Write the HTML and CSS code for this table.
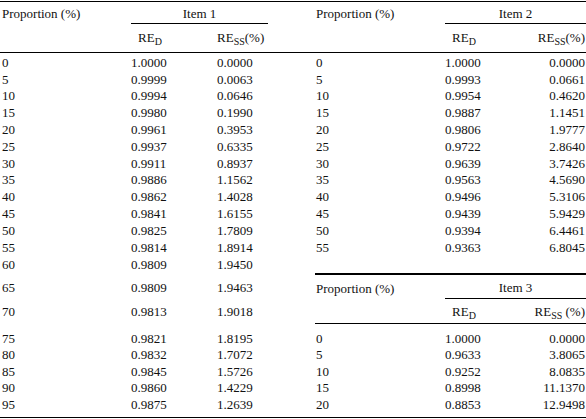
FILE: index.html
```html
<!DOCTYPE html>
<html>
	<head>
		<meta charset="UTF-8">
		<title>Proportion table</title>
		<link rel="stylesheet" href="styles.css">
	</head>
	<body>
		<table class="tbl">
			<colgroup>
				<col class="c-prop">
				<col class="c-red">
				<col class="c-ress">
				<col class="c-gap">
				<col class="c-prop2">
				<col class="c-red2">
				<col class="c-ress2">
			</colgroup>
			<tr class="h1">
				<td class="prop">Proportion (%)</td>
				<td class="item" colspan="2">Item 1</td>
				<td></td>
				<td class="prop p2">Proportion (%)</td>
				<td class="item" colspan="2">Item 2</td>
			</tr>
			<tr class="h2">
				<td></td>
				<td class="hd-red">RE<sub>D</sub></td>
				<td>RE<sub>SS</sub>(%)</td>
				<td></td>
				<td></td>
				<td class="hd-red">RE<sub>D</sub></td>
				<td class="r">RE<sub>SS</sub>(%)</td>
			</tr>
			<tr class="d first"><td>0</td><td>1.0000</td><td>0.0000</td><td></td><td class="p2">0</td><td>1.0000</td><td class="r">0.0000</td></tr>
			<tr class="d"><td>5</td><td>0.9999</td><td>0.0063</td><td></td><td class="p2">5</td><td>0.9993</td><td class="r">0.0661</td></tr>
			<tr class="d"><td>10</td><td>0.9994</td><td>0.0646</td><td></td><td class="p2">10</td><td>0.9954</td><td class="r">0.4620</td></tr>
			<tr class="d"><td>15</td><td>0.9980</td><td>0.1990</td><td></td><td class="p2">15</td><td>0.9887</td><td class="r">1.1451</td></tr>
			<tr class="d"><td>20</td><td>0.9961</td><td>0.3953</td><td></td><td class="p2">20</td><td>0.9806</td><td class="r">1.9777</td></tr>
			<tr class="d"><td>25</td><td>0.9937</td><td>0.6335</td><td></td><td class="p2">25</td><td>0.9722</td><td class="r">2.8640</td></tr>
			<tr class="d"><td>30</td><td>0.9911</td><td>0.8937</td><td></td><td class="p2">30</td><td>0.9639</td><td class="r">3.7426</td></tr>
			<tr class="d"><td>35</td><td>0.9886</td><td>1.1562</td><td></td><td class="p2">35</td><td>0.9563</td><td class="r">4.5690</td></tr>
			<tr class="d"><td>40</td><td>0.9862</td><td>1.4028</td><td></td><td class="p2">40</td><td>0.9496</td><td class="r">5.3106</td></tr>
			<tr class="d"><td>45</td><td>0.9841</td><td>1.6155</td><td></td><td class="p2">45</td><td>0.9439</td><td class="r">5.9429</td></tr>
			<tr class="d"><td>50</td><td>0.9825</td><td>1.7809</td><td></td><td class="p2">50</td><td>0.9394</td><td class="r">6.4461</td></tr>
			<tr class="d"><td>55</td><td>0.9814</td><td>1.8914</td><td></td><td class="p2">55</td><td>0.9363</td><td class="r">6.8045</td></tr>
			<tr class="d split"><td>60</td><td>0.9809</td><td>1.9450</td><td></td><td class="rule"></td><td class="rule"></td><td class="rule"></td></tr>
			<tr class="h3">
				<td>65</td><td>0.9809</td><td>1.9463</td><td></td>
				<td class="prop p2">Proportion (%)</td>
				<td class="item" colspan="2">Item 3</td>
			</tr>
			<tr class="h4">
				<td>70</td><td>0.9813</td><td>1.9018</td><td></td>
				<td class="rule"></td>
				<td class="rule hd-red">RE<sub>D</sub></td>
				<td class="rule r">RE<sub>SS</sub> (%)</td>
			</tr>
			<tr class="e first"><td>75</td><td>0.9821</td><td>1.8195</td><td></td><td class="p2">0</td><td>1.0000</td><td class="r">0.0000</td></tr>
			<tr class="e"><td>80</td><td>0.9832</td><td>1.7072</td><td></td><td class="p2">5</td><td>0.9633</td><td class="r">3.8065</td></tr>
			<tr class="e"><td>85</td><td>0.9845</td><td>1.5726</td><td></td><td class="p2">10</td><td>0.9252</td><td class="r">8.0835</td></tr>
			<tr class="e"><td>90</td><td>0.9860</td><td>1.4229</td><td></td><td class="p2">15</td><td>0.8998</td><td class="r">11.1370</td></tr>
			<tr class="e last"><td>95</td><td>0.9875</td><td>1.2639</td><td></td><td class="p2">20</td><td>0.8853</td><td class="r">12.9498</td></tr>
		</table>
	</body>
</html>
```

FILE: styles.css
```css
body{margin:0; background:#fff;}
.tbl{
	margin-top:1px;
	width:586px;
	table-layout:fixed;
	border-collapse:separate;
	border-spacing:0;
	font:13px/15px "Liberation Serif", "Times New Roman", serif;
	color:#111;
}
.c-prop{width:131px;}
.c-red{width:86px;}
.c-ress{width:51px;}
.c-gap{width:47px;}
.c-prop2{width:130px;}
.c-red2{width:85px;}
.c-ress2{width:56px;}

td{
	padding:0;
	white-space:nowrap;
	vertical-align:middle;
	box-sizing:border-box;
}
td:first-child{padding-left:2px;}
.p2{padding-left:1px;}
.r{text-align:right; padding-right:1px;}
.hd-red{padding-left:7px;}

sub{
	font-size:10px;
	line-height:0;
	vertical-align:-3px;
}

/* top header */
.h1 td{
	height:23px;
	border-top:1px solid #000;
	padding-top:1px;
}
.h1 .item{
	text-align:center;
	border-bottom:1px solid #000;
}
.h2 td{
	height:29px;
	border-bottom:1px solid #000;
	padding-bottom:2px;
}

/* upper data rows */
.d td{height:16.8px;}
.d.first td{height:17.8px; padding-top:1px;}
.d.split td{height:18.4px;}
.rule{border-bottom:1px solid #000;}

/* item 3 header */
.h3 td{height:25px; padding-top:3px;}
.h3 .prop{border-top:1px solid #000;}
.h3 .item{
	text-align:center;
	border-top:1px solid #000;
	border-bottom:1px solid #000;
	padding-top:2px;
}
.h4 td{height:25px; padding-top:1px;}

/* lower data rows */
.e td{height:16.5px;}
.e.first td{height:22.5px; padding-top:6px;}
.e.last td{
	height:22px;
	border-bottom:1px solid #000;
	padding-bottom:4.5px;
}
```
